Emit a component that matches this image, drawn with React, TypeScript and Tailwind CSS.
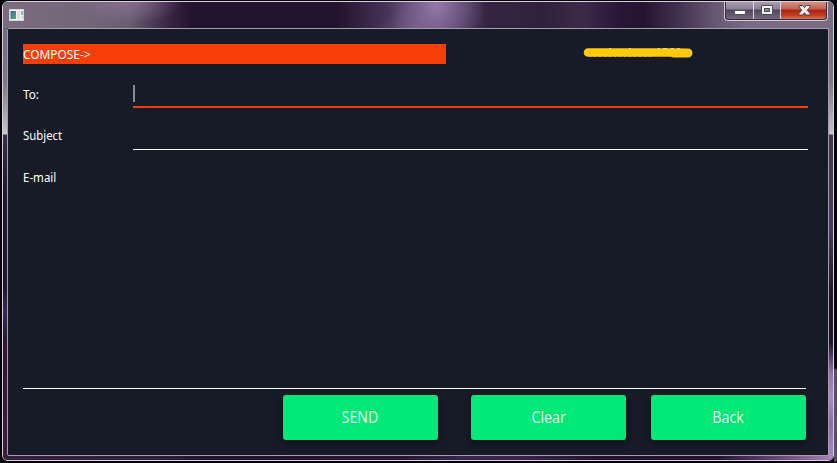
import React from "react";

const label = "block whitespace-nowrap text-[12px] leading-[20px] text-white origin-left";

function AppIcon() {
  return (
    <svg width="15" height="12" viewBox="0 0 15 12" className="block">
      <defs>
        <linearGradient id="pane" x1="0" y1="0" x2="1" y2="1">
          <stop offset="0" stopColor="#356b96" />
          <stop offset="1" stopColor="#55ad78" />
        </linearGradient>
      </defs>
      <rect width="15" height="12" fill="#d5d5d5" />
      <rect x="1" y="1" width="13" height="10" fill="#f2f2f2" />
      <rect x="1.5" y="2" width="5.5" height="8" fill="url(#pane)" />
      <rect x="8" y="2" width="3" height="8" fill="#dedede" />
      <rect x="12" y="2" width="2" height="4" fill="#8fb9a8" />
      <rect x="12" y="7" width="2" height="3" fill="#dedede" />
    </svg>
  );
}

function WindowControls() {
  const base = "flex h-[18px] items-center justify-center border-r border-[#ddd5e1]";
  const glass = " bg-[linear-gradient(#aaa0b2_0%,#8a7f94_45%,#50465e_50%,#74697f_100%)]";
  return (
    <div className="flex h-[20px] w-[104px] rounded-b-[4px] border border-t-0 border-[#d4cbd8] bg-[#352c3b] px-px pb-px">
      <div className={base + glass + " w-[28px] rounded-bl-[3px]"}>
        <svg width="12" height="6" viewBox="0 0 12 6" className="mt-[5px]">
          <rect x="0.5" y="0.5" width="11" height="4" rx="0.5" fill="#fff" stroke="#555260" />
        </svg>
      </div>
      <div className={base + glass + " w-[27px]"}>
        <svg width="12" height="10" viewBox="0 0 12 10">
          <rect x="0.5" y="0.5" width="11" height="9" rx="0.5" fill="#f4f4f4" stroke="#494958" />
          <rect x="3.5" y="3.5" width="5" height="3" fill="#8a8198" stroke="#494958" />
        </svg>
      </div>
      <div className="flex h-[18px] flex-1 items-center justify-center rounded-br-[3px] bg-[linear-gradient(#d49b91_0%,#c45f50_45%,#a92310_50%,#c13f21_80%,#d1755b_100%)]">
        <svg width="13" height="11" viewBox="0 0 13 11" className="ml-[2px]">
          <path d="M1 .5h3.6L6.5 2.7 8.4.5H12V2L9.2 5.25 12 8.5V10H8.4L6.5 7.8 4.6 10H1V8.5L3.8 5.25 1 2Z" fill="#f5f5f5" stroke="#4d4554" />
        </svg>
      </div>
    </div>
  );
}

function ActionButton({ children }: { children: React.ReactNode }) {
  return (
    <button className="h-[45px] w-[155px] rounded-[3px] bg-[#00e976] font-['Open_Sans','Noto_Sans',sans-serif] text-[15.5px] leading-[45px] text-white/95 shadow-[0_3px_8px_rgba(0,0,0,0.35)]">
      <span className="inline-block scale-x-[0.92]">{children}</span>
    </button>
  );
}

export default function App() {
  return (
    <div className="h-[463px] w-[837px] overflow-hidden bg-[linear-gradient(to_right,#050308_0_834px,transparent_834px),linear-gradient(#030303_0_368px,#55515a_370px_460px,#111_463px)] pl-[2px] pt-px font-['Noto_Sans','Open_Sans',sans-serif]">
      <div className="h-[460px] w-[832px] rounded-[6px] border border-[#d9cfdd] bg-[#24132f]">
        <div className="flex h-[458px] flex-col overflow-hidden rounded-[5px]">
          <div className="flex h-[26px] shrink-0 justify-between rounded-t-[5px] bg-[radial-gradient(ellipse_48px_45px_at_434px_4px,#9377a9_0%,#8a6fa0aa_35%,#80678f00_100%),radial-gradient(ellipse_35px_20px_at_410px_26px,#745d81aa,#745d8100),radial-gradient(ellipse_55px_22px_at_125px_0px,#92799eaa,#92799e00),linear-gradient(to_right,#7a6d7e_0px,#736579_90px,#6b5d71_125px,#362340_168px,#24132f_190px,#24132f_335px,#4b375d_390px,#6c5780_430px,#49375a_462px,#352343_485px,#33233d_510px,#302039_540px,#3d2a4b_580px,#291638_615px,#24132f_640px,#423050_675px,#66556f_710px,#796c82_745px,#796c82_830px)]">
            <div className="pl-[6px] pt-[7px]"><AppIcon /></div>
            <div className="-mt-px mr-[5px]"><WindowControls /></div>
          </div>
          <div className="flex h-[432px] rounded-b-[5px] bg-[linear-gradient(to_right,#352040,#302039_18%,#24132f_25%,#281633_48%,#38264a_55%,#382446_63%,#24132f_72%,#24132f_86%,#6a4c80_94%,#a284bb)]">
            <div className="h-[432px] w-[4px] shrink-0 bg-[linear-gradient(#756880_0px,#817688_55px,#c5becb_104px,#d1cbd5_106px,#3b2b45_107px,#24132f_170px,#24132f_260px,#3c2b50_283px,#2b1838_310px,#352040_432px)]" />
            <div className="flex h-[428px] w-[822px] shrink-0 flex-col rounded-[2px] border border-[#a69bab] bg-[#171a27] pl-[15px] pt-[15px]">
              <div className="flex h-[20px]">
                <div className="h-[20px] w-[423px] bg-[#f73e08]">
                  <span className={label + " w-[80px] scale-x-[0.99] pt-px"}>COMPOSE-&gt;</span>
                </div>
                <svg width="110" height="11" viewBox="0 0 110 11" className="ml-[137px] mt-[3px]">
                  <path d="M5 1.2H88L105 1.5A4.4 4.4 0 0 1 105 10.5H90L88 9.8H5A4.3 4.3 0 0 1 5 1.2Z" fill="#ffc90e" />
                  <path d="M26 1.5h2M46 1.5h2M75 1.5h2M80 1.5h4M88 1.5h3M94 1.5h3" stroke="#eee8c6" strokeWidth="0.7" />
                  <path d="M6 9.5H70" stroke="#e5c450" strokeWidth="0.7" strokeDasharray="2 3" />
                </svg>
              </div>
              <div className="mt-[20px] flex h-[24px] w-[785px]">
                <div className="w-[110px] pt-px"><span className={label + " w-[60px] scale-x-[0.98]"}>To:</span></div>
                <div className="h-[24px] flex-1 border-b-2 border-[#f73e08] pt-px">
                  <div className="h-[17px] w-[2px] bg-[#8b8c93]" />
                </div>
              </div>
              <div className="mt-[16px] flex h-[26px] w-[785px]">
                <div className="w-[110px] pt-[2px]"><span className={label + " w-[80px] scale-x-[0.945]"}>Subject</span></div>
                <div className="h-[26px] flex-1 border-b border-white" />
              </div>
              <div className="mt-[17px] h-[222px] w-[783px] border-b border-white pt-px">
                <span className={label + " w-[80px] scale-x-[0.96]"}>E-mail</span>
              </div>
              <div className="mt-[6px] flex pl-[260px]">
                <ActionButton>SEND</ActionButton>
                <div className="ml-[33px] mr-[25px]"><ActionButton>Clear</ActionButton></div>
                <ActionButton>Back</ActionButton>
              </div>
            </div>
            <div className="h-[432px] w-[4px] shrink-0 bg-[linear-gradient(#786b81_0px,#817688_55px,#c5becb_104px,#d1cbd5_106px,#453552_107px,#4c3b60_200px,#24132f_267px,#24132f_315px,#8f75a9_345px,#aa8cc4_370px,#896eaa_395px,#aa8cc4_432px)]" />
          </div>
        </div>
      </div>
    </div>
  );
}
